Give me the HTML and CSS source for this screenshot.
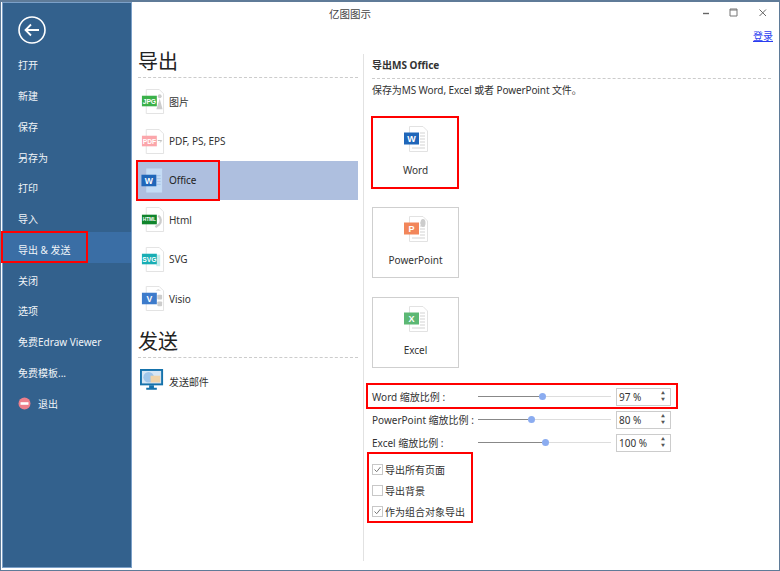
FILE: index.html
```html
<!DOCTYPE html>
<html lang="zh">
<head>
<meta charset="utf-8">
<title>亿图图示</title>
<link rel="stylesheet" href="styles.css">
</head>
<body>
<svg class="defs" width="0" height="0" aria-hidden="true">
  <defs>
    <symbol id="page" viewBox="0 0 26 26">
      <path d="M6.5 .5H20L24.5 5V25.5H6.5Z" fill="#fff" stroke="#e2e2e2"/>
    </symbol>
    <symbol id="lines" viewBox="0 0 26 26">
      <path d="M17 7h5M17 10h5M17 13h5M17 16h5M17 19h5M9 22h13" stroke="#d4d4d4" stroke-width="1.2" fill="none"/>
    </symbol>
  </defs>
</svg>
<div class="window">
  <nav class="sidebar">
    <div class="back">
      <svg width="28" height="28" viewBox="0 0 28 28"><circle cx="14" cy="14" r="13" fill="none" stroke="#fff" stroke-width="1.6"/><path d="M21 14H8M13 8.5L7.5 14L13 19.5" fill="none" stroke="#fff" stroke-width="1.8"/></svg>
    </div>
    <ul class="menu">
      <li class="menu-item">打开</li>
      <li class="menu-item">新建</li>
      <li class="menu-item">保存</li>
      <li class="menu-item">另存为</li>
      <li class="menu-item">打印</li>
      <li class="menu-item">导入</li>
      <li class="menu-item active">导出 &amp; 发送</li>
      <li class="menu-item">关闭</li>
      <li class="menu-item">选项</li>
      <li class="menu-item">免费Edraw Viewer</li>
      <li class="menu-item">免费模板...</li>
      <li class="menu-item exit">
        <svg width="13" height="13" viewBox="0 0 13 13"><circle cx="6.5" cy="6.5" r="6" fill="#ee7f8b"/><rect x="2.5" y="5.2" width="8" height="2.6" fill="#fff"/></svg>
        <span>退出</span>
      </li>
    </ul>
  </nav>
  <main class="content">
    <header class="titlebar">
      <span class="title">亿图图示</span>
      <div class="win-controls">
        <svg width="10" height="10" viewBox="0 0 10 10"><path d="M3 5.5H9" stroke="#666" stroke-width="1.4"/></svg>
        <svg width="10" height="10" viewBox="0 0 10 10"><path d="M1 1H8V8H1ZM1 2H8" fill="none" stroke="#777" stroke-width="1"/></svg>
        <svg width="10" height="10" viewBox="0 0 10 10"><path d="M1.5 1.5L8 8M8 1.5L1.5 8" fill="none" stroke="#666" stroke-width="1"/></svg>
      </div>
    </header>
    <div class="login-row"><a class="login" href="#">登录</a></div>
    <div class="panels">
      <section class="col-mid">
        <h2 class="heading">导出</h2>
        <ul class="format-list">
          <li class="format">
            <svg class="format-icon" viewBox="0 0 26 26"><use href="#page"/><circle cx="20.5" cy="7.5" r="2" fill="#ccc"/><path d="M17 21L20.5 10L23.5 21Z" fill="#ccc"/><rect x="2" y="7" width="15.5" height="11" fill="#3bb14a"/><text x="9.75" y="15.2" class="tag">JPG</text></svg>
            <span>图片</span>
          </li>
          <li class="format">
            <svg class="format-icon" viewBox="0 0 26 26"><use href="#page"/><path d="M18.5 12h4l-1.5 2" fill="none" stroke="#bbb"/><rect x="2" y="7" width="15.5" height="11" fill="#fba6ab"/><text x="9.75" y="15.2" class="tag">PDF</text></svg>
            <span>PDF, PS, EPS</span>
          </li>
          <li class="format selected">
            <svg class="format-icon" viewBox="0 0 26 26"><path d="M6.5 .5H23V25.5H6.5Z" fill="#c5dcf5"/><path d="M17.5 8h4M17.5 11h4M17.5 14h4M17.5 17h4" stroke="#a8c4e6"/><rect x="1.5" y="7" width="15.5" height="12" fill="#1f66b9"/><text x="9.25" y="16.5" class="tag tag-lg">W</text></svg>
            <span>Office</span>
          </li>
          <li class="format">
            <svg class="format-icon" viewBox="0 0 26 26"><use href="#page"/><path d="M19 9a6 6 0 0 1 1 9l-4 3" fill="none" stroke="#ccc" stroke-width="2.4"/><rect x="2" y="8" width="15.5" height="10" fill="#10852c"/><text x="9.75" y="15" class="tag tag-sm">HTML</text></svg>
            <span>Html</span>
          </li>
          <li class="format">
            <svg class="format-icon" viewBox="0 0 26 26"><use href="#page"/><path d="M17 8h4v12h-4" fill="#c8ecec"/><rect x="2" y="7" width="15.5" height="11" fill="#18aeb4"/><text x="9.75" y="15.2" class="tag">SVG</text></svg>
            <span>SVG</span>
          </li>
          <li class="format">
            <svg class="format-icon" viewBox="0 0 26 26"><use href="#page"/><path d="M16 5l3-2 3 2z" fill="#ddd"/><rect x="18" y="9" width="5" height="5" rx="1" fill="#ccc"/><rect x="18" y="16" width="5" height="5" rx="1" fill="#ccc"/><rect x="2" y="7" width="15.5" height="12" fill="#3d7bcb"/><text x="9.75" y="16.5" class="tag tag-lg">V</text></svg>
            <span>Visio</span>
          </li>
        </ul>
        <h2 class="heading heading-send">发送</h2>
        <ul class="format-list format-list-send">
          <li class="format">
            <svg class="format-icon" viewBox="0 0 26 26"><rect x="1" y="1" width="22" height="15" fill="#d6e6f4" stroke="#1572ab" stroke-width="2"/><circle cx="9" cy="8.5" r="5.5" fill="#9fc6ea"/><rect x="11" y="7" width="10" height="7" fill="#efd3a8"/><path d="M9.5 17h5v2.500h3v2H6.500v-2h3z" fill="#1572ab"/></svg>
            <span>发送邮件</span>
          </li>
        </ul>
      </section>
      <section class="col-right">
        <h3 class="sub-title">导出MS Office</h3>
        <p class="desc">保存为MS Word, Excel 或者 PowerPoint 文件。</p>
        <div class="doc-buttons">
          <button class="doc-btn" type="button">
            <svg class="doc-icon" viewBox="0 0 26 26"><use href="#page"/><use href="#lines"/><rect x="1" y="6.5" width="15" height="12" fill="#1f66b9"/><text x="8.5" y="16" class="tag tag-lg">W</text></svg>
            <span>Word</span>
          </button>
          <button class="doc-btn" type="button">
            <svg class="doc-icon" viewBox="0 0 26 26"><use href="#page"/><use href="#lines"/><ellipse cx="20" cy="7" rx="2.5" ry="4" fill="#ccc"/><rect x="1" y="6.5" width="15" height="12" fill="#f2865a"/><text x="8.5" y="16" class="tag tag-lg">P</text></svg>
            <span>PowerPoint</span>
          </button>
          <button class="doc-btn" type="button">
            <svg class="doc-icon" viewBox="0 0 26 26"><use href="#page"/><use href="#lines"/><rect x="1" y="6.5" width="15" height="12" fill="#5cb874"/><text x="8.5" y="16" class="tag tag-lg">X</text></svg>
            <span>Excel</span>
          </button>
        </div>
        <div class="scales">
          <div class="scale-row">
            <label class="scale-label">Word 缩放比例 :</label>
            <div class="slider"><div class="slider-fill" style="width:61px"></div><div class="slider-thumb"></div><div class="slider-rest"></div></div>
            <div class="spin"><span>97 %</span><span class="spin-arrows"><i>▲</i><i>▼</i></span></div>
          </div>
          <div class="scale-row">
            <label class="scale-label">PowerPoint 缩放比例 :</label>
            <div class="slider"><div class="slider-fill" style="width:50px"></div><div class="slider-thumb"></div><div class="slider-rest"></div></div>
            <div class="spin"><span>80 %</span><span class="spin-arrows"><i>▲</i><i>▼</i></span></div>
          </div>
          <div class="scale-row">
            <label class="scale-label">Excel 缩放比例 :</label>
            <div class="slider"><div class="slider-fill" style="width:64px"></div><div class="slider-thumb"></div><div class="slider-rest"></div></div>
            <div class="spin"><span>100 %</span><span class="spin-arrows"><i>▲</i><i>▼</i></span></div>
          </div>
        </div>
        <div class="checks">
          <div class="check-row"><span class="box checked"><svg width="9" height="9" viewBox="0 0 9 9"><path d="M1.500 4.500L3.700 6.700L7.500 2" fill="none" stroke="#777" stroke-width="1"/></svg></span>导出所有页面</div>
          <div class="check-row"><span class="box"></span>导出背景</div>
          <div class="check-row"><span class="box checked"><svg width="9" height="9" viewBox="0 0 9 9"><path d="M1.500 4.500L3.700 6.700L7.500 2" fill="none" stroke="#777" stroke-width="1"/></svg></span>作为组合对象导出</div>
        </div>
      </section>
    </div>
  </main>
  <div class="mark mark-office"></div>
  <div class="mark mark-send"></div>
  <div class="mark mark-word"></div>
  <div class="mark mark-scale"></div>
  <div class="mark mark-checks"></div>
</div>
</body>
</html>
```

FILE: styles.css
```css
* { box-sizing: border-box; }
html, body { margin: 0; padding: 0; }
body {
  width: 780px;
  height: 571px;
  overflow: hidden;
  background: #fff;
  font-family: "Noto Sans", "Noto Sans CJK SC", sans-serif;
  font-size: 10px;
  color: #333;
}
ul { list-style: none; margin: 0; padding: 0; }
.defs { position: absolute; }
.window {
  position: relative;
  width: 780px;
  height: 571px;
  display: flex;
  background: #fff;
  border-style: solid;
  border-color: #5f7b98;
  border-width: 2px 1px 1px 1px;
}
.sidebar {
  width: 130px;
  flex: none;
  margin: 0 0 2px 1px;
  background: #33618d;
  color: #f0f4f8;
  border: 1px solid #7ba0c8;
}
.back { height: 44.5px; padding: 13px 0 0 15px; }
.menu-item {
  height: 30.75px;
  display: flex;
  align-items: center;
  gap: 7px;
  padding: 4px 0 0 15px;
  white-space: nowrap;
}
.menu-item.active { background: #3a6ea5; }
.content { flex: 1; min-width: 0; display: flex; flex-direction: column; }
.titlebar {
  height: 24px;
  flex: none;
  position: relative;
  display: flex;
  align-items: center;
  justify-content: flex-end;
}
.title { position: absolute; left: 197px; top: 4px; color: #444; font-size: 10.5px; }
.win-controls { display: flex; gap: 19px; padding: 0 11px 3px 0; }
.login-row {
  height: 24px;
  flex: none;
  display: flex;
  justify-content: flex-end;
  align-items: center;
  padding: 0 6px 6px 0;
}
.login { color: #2a3df0; text-decoration: underline; }
.panels { flex: 1; display: flex; min-height: 0; }
.col-mid { width: 231px; flex: none; padding: 0 5px 0 6px; }
.heading {
  margin: 0;
  height: 28px;
  font-size: 20px;
  line-height: 24px;
  font-weight: 400;
  color: #222;
  border-bottom: 1px dashed #ccc;
}
.heading-send { margin-top: 12px; }
.format-list { margin-top: 4px; }
.format-list-send { margin-top: 3px; }
.format {
  height: 39.4px;
  display: flex;
  align-items: center;
  gap: 4px;
  padding-left: 2px;
  letter-spacing: -.05px;
}
.format.selected { background: #aebfdf; color: #222; }
.format-icon { width: 25px; height: 25px; flex: none; }
.tag {
  font-size: 7px;
  font-weight: 700;
  fill: #fff;
  text-anchor: middle;
  font-family: "Liberation Sans", sans-serif;
}
.tag-lg { font-size: 9px; }
.tag-sm { font-size: 5px; }
.col-right {
  flex: 1;
  margin: 4px 0 9px;
  padding: 0 8px;
  border-left: 1px solid #e2e2e2;
}
.sub-title {
  margin: 4px 0 0;
  height: 21px;
  font-size: 10px;
  line-height: 14px;
  font-weight: 700;
  color: #333;
  border-bottom: 1px dashed #ccc;
}
.desc {
  margin: 4px 0 0;
  height: 14px;
  line-height: 14px;
  white-space: nowrap;
  letter-spacing: -.1px;
}
.doc-buttons { display: flex; flex-direction: column; gap: 19px; margin-top: 20px; }
.doc-btn {
  width: 87px;
  height: 71px;
  padding: 8px 0 0;
  background: #fff;
  border: 1px solid #cfcfcf;
  font: inherit;
  color: #333;
  display: flex;
  flex-direction: column;
  align-items: center;
  gap: 11px;
}
.doc-icon { width: 26px; height: 26px; }
.scales { margin-top: 17px; }
.scale-row { height: 23px; display: flex; align-items: center; }
.scale-label { width: 106px; flex: none; white-space: nowrap; }
.slider { width: 133px; flex: none; display: flex; align-items: center; }
.slider-fill { height: 1px; background: #888; flex: none; }
.slider-thumb { width: 7px; height: 7px; border-radius: 50%; background: #8bacf0; flex: none; }
.slider-rest { height: 1px; background: #ddd; flex: 1; }
.spin {
  width: 55px;
  height: 18px;
  margin-left: 5px;
  border: 1px solid #ccc;
  display: flex;
  align-items: center;
  justify-content: space-between;
  padding: 0 5px 0 2px;
}
.spin-arrows { display: flex; flex-direction: column; gap: 2px; }
.spin-arrows i { font-style: normal; font-size: 4px; line-height: 4px; color: #555; }
.checks { margin-top: 4.5px; }
.check-row { height: 21px; display: flex; align-items: center; gap: 2px; white-space: nowrap; }
.box {
  width: 11px;
  height: 11px;
  flex: none;
  border: 1px solid #c8c8c8;
  background: #fff;
  display: flex;
  align-items: center;
  justify-content: center;
}
.mark { position: absolute; border: 2px solid #f00; pointer-events: none; }
.mark-office { left: 135px; top: 158px; width: 84px; height: 41px; }
.mark-send { left: 0; top: 229px; width: 87px; height: 32px; }
.mark-word { left: 370px; top: 114px; width: 88px; height: 73px; }
.mark-scale { left: 365px; top: 381px; width: 312px; height: 26px; }
.mark-checks { left: 366px; top: 450px; width: 106px; height: 71px; }
```
